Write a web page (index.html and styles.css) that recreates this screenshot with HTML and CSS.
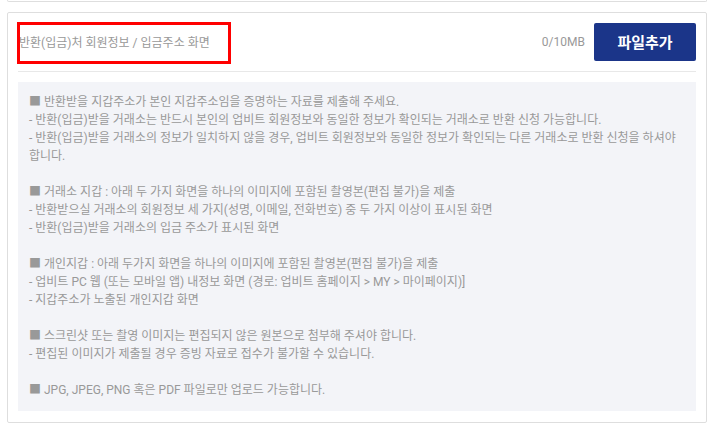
FILE: index.html
```html
<!DOCTYPE html>
<html lang="ko">
<head>
  <meta charset="UTF-8">
  <meta name="viewport" content="width=device-width, initial-scale=1">
  <title>파일 첨부</title>
  <link rel="stylesheet" href="styles.css">
</head>
<body>

  <!-- 이전 항목 (끝부분만 보임) -->
  <div class="box box-prev"></div>

  <!-- 첨부 영역 -->
  <section class="box upload">
    <div class="upload-head">
      <span class="mark"></span>
      <h3 class="upload-title">반환(입금)처 회원정보 / 입금주소 화면</h3>
      <span class="upload-size">0/10MB</span>
      <button class="btn-add" type="button">파일추가</button>
    </div>

    <div class="notice">
      <p>
        <span class="sq">■</span> 반환받을 지갑주소가 본인 지갑주소임을 증명하는 자료를 제출해 주세요.<br>
        - 반환(입금)받을 거래소는 반드시 본인의 업비트 회원정보와 동일한 정보가 확인되는 거래소로 반환 신청 가능합니다.<br>
        - 반환(입금)받을 거래소의 정보가 일치하지 않을 경우, 업비트 회원정보와 동일한 정보가 확인되는 다른 거래소로 반환 신청을 하셔야 합니다.
      </p>
      <p>
        <span class="sq">■</span> 거래소 지갑 : 아래 두 가지 화면을 하나의 이미지에 포함된 촬영본(편집 불가)을 제출<br>
        - 반환받으실 거래소의 회원정보 세 가지(성명, 이메일, 전화번호) 중 두 가지 이상이 표시된 화면<br>
        - 반환(입금)받을 거래소의 입금 주소가 표시된 화면
      </p>
      <p>
        <span class="sq">■</span> 개인지갑 : 아래 두가지 화면을 하나의 이미지에 포함된 촬영본(편집 불가)을 제출<br>
        - 업비트 PC 웹 (또는 모바일 앱) 내정보 화면 (경로: 업비트 홈페이지 &gt; MY &gt; 마이페이지)]<br>
        - 지갑주소가 노출된 개인지갑 화면
      </p>
      <p>
        <span class="sq">■</span> 스크린샷 또는 촬영 이미지는 편집되지 않은 원본으로 첨부해 주셔야 합니다.<br>
        - 편집된 이미지가 제출될 경우 증빙 자료로 접수가 불가할 수 있습니다.
      </p>
      <p>
        <span class="sq">■</span> JPG, JPEG, PNG 혹은 PDF 파일로만 업로드 가능합니다.
      </p>
    </div>
  </section>

</body>
</html>
```

FILE: styles.css
```css
/* RESET */
* {
  margin: 0;
  padding: 0;
  box-sizing: border-box;
  font-family: Roboto, 'Noto Sans CJK KR', sans-serif;
}

body {
  background: #fff;
  color: #999;
  width: 700px;
  margin: 0 0 0 7px;
}

/* BOX */
.box {
  border: 1px solid #dedede;
  border-radius: 2px;
  background: #fff;
}

.box-prev {
  height: 2px;
  border-top: none;
  border-radius: 0 0 2px 2px;
  margin-bottom: 10px;
}

.upload {
  padding: 10px 10px 11px;
}

/* HEAD */
.upload-head {
  position: relative;
  display: flex;
  align-items: center;
  height: 49px;
  padding-bottom: 11px;
  border-bottom: 1px solid #e8e8e8;
}

.upload-title {
  flex: 1;
  padding-left: 1px;
  font-size: 12px;
  font-weight: 400;
  color: #999;
}

.upload-size {
  font-size: 12px;
  color: #999;
  margin-right: 9px;
}

.btn-add {
  width: 102px;
  height: 38px;
  background: #1b3589;
  color: #fff;
  border: none;
  border-radius: 2px;
  font-size: 15px;
  font-weight: 700;
  cursor: pointer;
}

/* annotation box */
.mark {
  position: absolute;
  left: -1px;
  top: -1px;
  width: 214px;
  height: 42px;
  border: 3px solid #f00;
  pointer-events: none;
}

/* NOTICE */
.notice {
  margin-top: 10px;
  background: #f3f4f8;
  padding: 11px 11px 12px;
  font-size: 12px;
  line-height: 18px;
  color: #999;
}

.notice p {
  margin-bottom: 18px;
}

.notice p:last-child {
  margin-bottom: 0;
}

.sq {
  color: #999;
}
```
